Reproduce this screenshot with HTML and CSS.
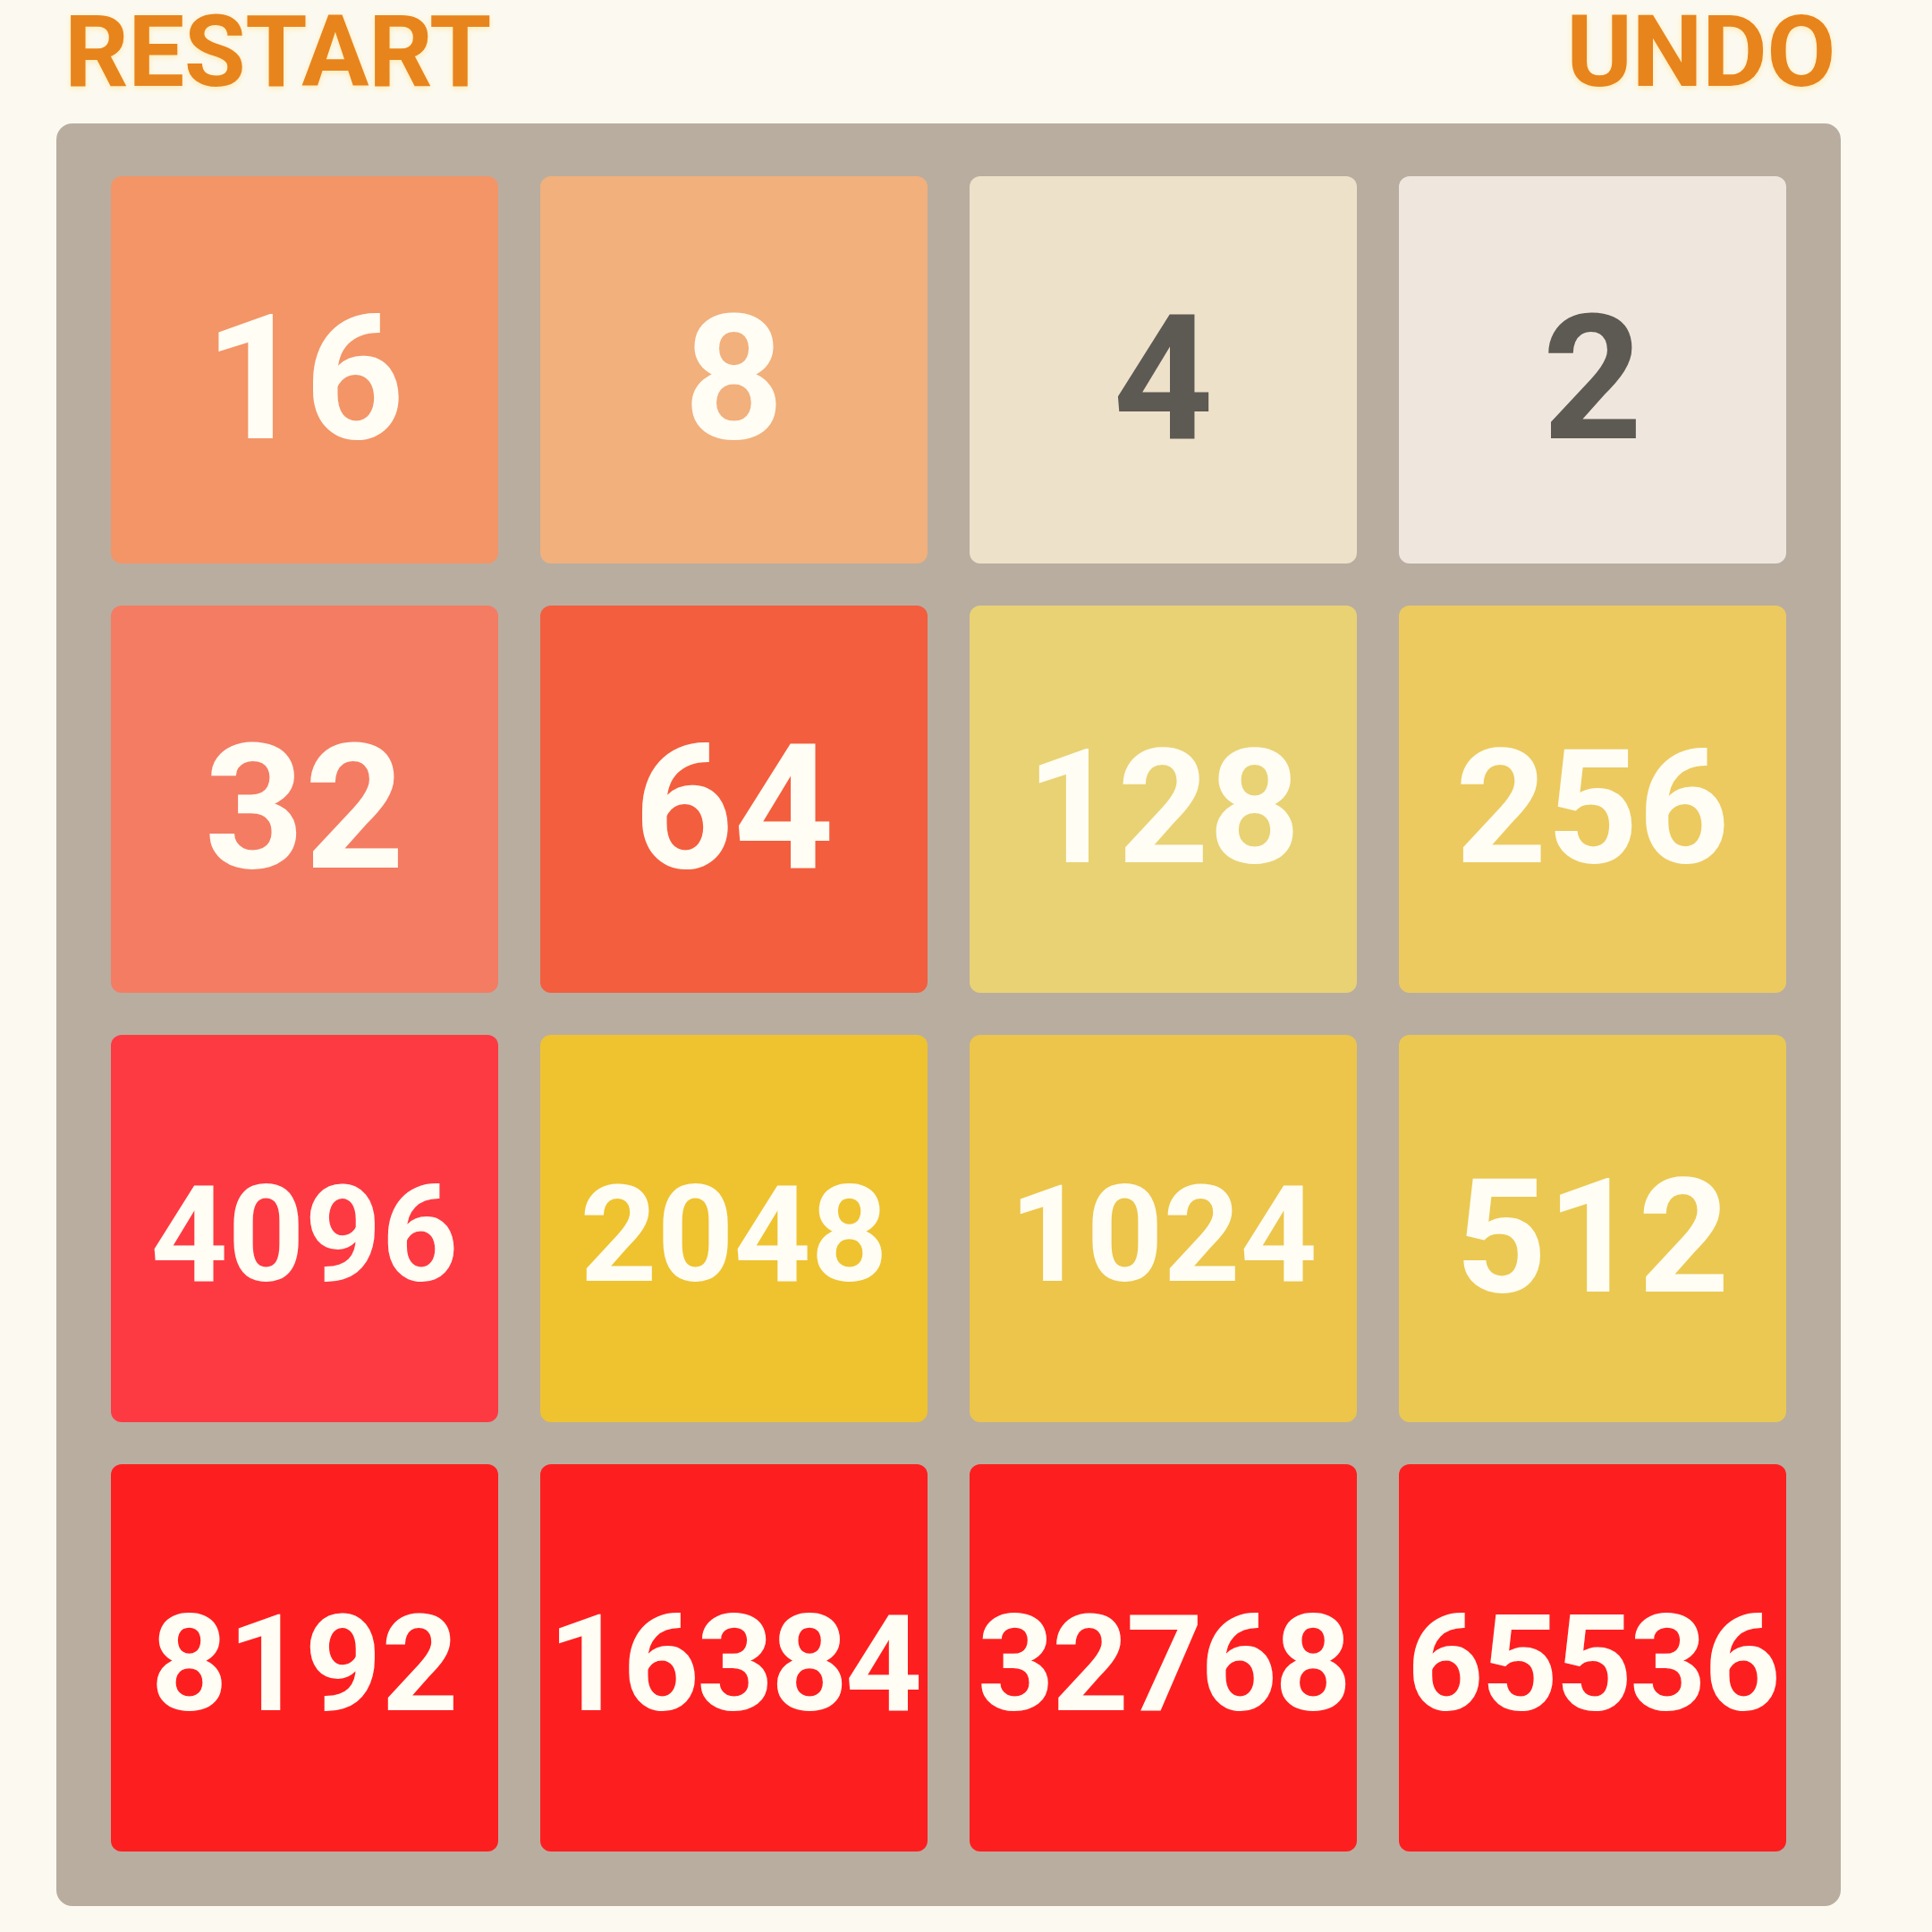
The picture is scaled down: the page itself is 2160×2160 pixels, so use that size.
FILE: index.html
```html
<!DOCTYPE html>
<html lang="en">
<head>
    <meta charset="UTF-8">
    <meta name="viewport" content="width=device-width, initial-scale=1.0">
    <title>2048</title>
    <link rel="stylesheet" href="styles.css">
</head>
<body>
    <div class="game">
        <div class="controls">
            <button class="control" id="restart">RESTART</button>
            <button class="control" id="undo">UNDO</button>
        </div>

        <div class="board">
            <div class="tile t16">16</div>
            <div class="tile t8">8</div>
            <div class="tile t4">4</div>
            <div class="tile t2">2</div>

            <div class="tile t32">32</div>
            <div class="tile t64">64</div>
            <div class="tile t128 three">128</div>
            <div class="tile t256 three">256</div>

            <div class="tile t4096 four">4096</div>
            <div class="tile t2048 four">2048</div>
            <div class="tile t1024 four">1024</div>
            <div class="tile t512 three">512</div>

            <div class="tile t8192 four">8192</div>
            <div class="tile tbig five">16384</div>
            <div class="tile tbig five">32768</div>
            <div class="tile tbig five">65536</div>
        </div>
    </div>
</body>
</html>
```

FILE: styles.css
```css
* {
    margin: 0;
    padding: 0;
    box-sizing: border-box;
}

body {
    background: #fcfaf0;
    font-family: 'Roboto', 'Liberation Sans', sans-serif;
}

.game {
    width: 1995px;
    margin-left: 63px;
}

.controls {
    display: flex;
    justify-content: space-between;
    align-items: flex-start;
    height: 138px;
    padding: 10px 6px 0 9px;
}

.control {
    background: none;
    border: none;
    cursor: pointer;
    font-family: 'Roboto', 'Liberation Sans', sans-serif;
    font-weight: 700;
    font-size: 112px;
    line-height: 96px;
    color: #e8841c;
    letter-spacing: -0.5px;
    text-shadow: 0 2px 6px rgba(255, 226, 150, 0.7);
}

.board {
    display: grid;
    grid-template-columns: repeat(4, 433px);
    grid-auto-rows: 433px;
    gap: 47px;
    padding: 59px 61px 61px;
    background: #b9ada0;
    border-radius: 18px;
}

.tile {
    display: flex;
    justify-content: center;
    align-items: center;
    border-radius: 12px;
    color: #fffdf4;
    font-weight: 700;
    font-size: 195px;
    padding-top: 20px;
    white-space: nowrap;
}

.tile.three {
    font-size: 178px;
    padding-top: 18px;
}

.tile.four {
    font-size: 150px;
    padding-top: 14px;
}

.tile.five {
    font-size: 150px;
    letter-spacing: -3px;
    padding-top: 14px;
}

.t2 { background: #efe7dd; color: #5d5953; }
.t4 { background: #ede1c9; color: #5d5953; }
.t8 { background: #f1b07c; }
.t16 { background: #f39567; }
.t32 { background: #f47c63; }
.t64 { background: #f35e3e; }
.t128 { background: #e9d274; }
.t256 { background: #ecca5f; }
.t512 { background: #ebc851; }
.t1024 { background: #ecc54a; }
.t2048 { background: #efc230; }
.t4096 { background: #fd3a42; }
.t8192 { background: #fd1f1f; }
.tbig { background: #fd1f1f; }
```
